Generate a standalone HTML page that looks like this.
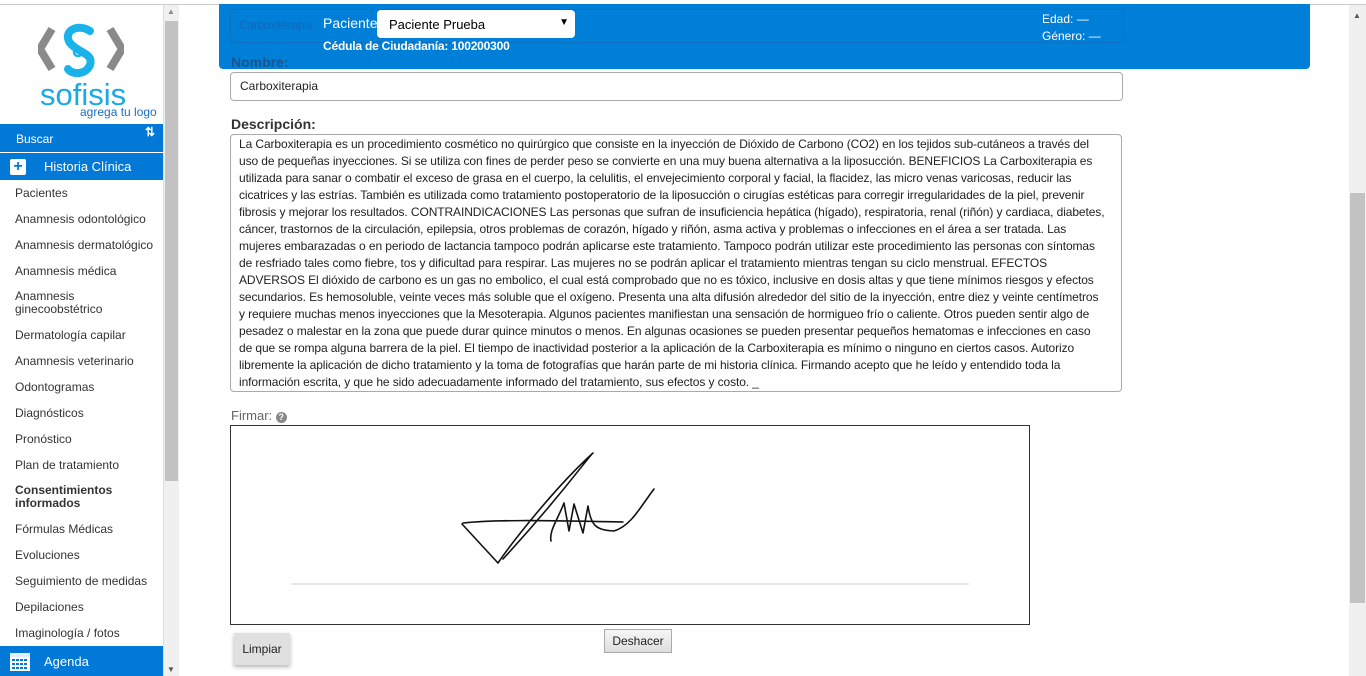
<!DOCTYPE html>
<html><head><meta charset="utf-8"><style>
body{margin:0;width:1366px;height:676px;overflow:hidden;background:#fff;font-family:"Liberation Sans",sans-serif;position:relative}
.abs{position:absolute}
#top{left:0;top:0;width:1366px;height:4px;background:#fff;border-bottom:1px solid #ccc}
#side{left:0;top:5px;width:163px;height:671px;background:#fff;border-right:1px solid #ddd}
#sbar{left:164px;top:5px;width:15px;height:671px;background:#f0f0f0}
#sbar .th{position:absolute;left:1px;top:16px;width:13px;height:460px;background:#c2c2c2}
.nav{position:absolute;left:15px;font-size:12px;color:#333}
.blue{position:absolute;left:0;width:163px;background:#0279d6;color:#fff;font-size:12px}
#hdr{left:219px;top:4px;width:1091px;height:65px;background:#007fd8;border-radius:0 0 4px 4px}
.lbl{font-weight:bold;font-size:14px;color:#333}
.box{border:1px solid #aaa;border-radius:4px;background:#fff}
#desc{left:230px;top:134px;width:878px;height:251px;padding:1px 4px 4px 8px;font-size:12px;line-height:17px;color:#222;border-radius:4px;white-space:nowrap;overflow:hidden;letter-spacing:-0.1px}
#msb{left:1349px;top:5px;width:17px;height:671px;background:#f0f0f0}
#msb .th{position:absolute;left:1px;top:188px;width:15px;height:410px;background:#c2c2c2}
</style></head><body>
<div class="abs" id="top"></div>
<div class="abs" id="side">
<svg class="abs" style="left:38px;top:14px" width="86" height="90" viewBox="0 0 86 90">
<path d="M14 10 L2 30 L14 50" stroke="#8a8a8a" stroke-width="8" fill="none"/>
<path d="M72 10 L84 30 L72 50" stroke="#8a8a8a" stroke-width="8" fill="none"/>
<path d="M52 12 C40 4 24 12 32 24 C40 34 56 34 52 46 C48 56 34 56 30 50" stroke="#19b3ea" stroke-width="8" fill="none" stroke-linecap="round"/>
<circle cx="40" cy="33" r="4" fill="none" stroke="#19b3ea" stroke-width="2.5"/>
</svg>
<div class="abs" style="left:40px;top:72px;font-size:31px;color:#19a8e8">sofisis</div>
<div class="abs" style="left:80px;top:100px;font-size:12px;color:#1a6fc0">agrega tu logo</div>
<div class="blue" style="top:119px;height:28px"><span style="position:absolute;left:16px;top:8px">Buscar</span><span style="position:absolute;right:8px;top:1px;font-weight:bold">⇅</span></div>
<div class="blue" style="top:148px;height:27px"><span style="position:absolute;left:10px;top:6px;width:16px;height:16px;background:#fff;border-radius:2px;color:#0279d6;font-weight:bold;font-size:16px;line-height:16px;text-align:center">+</span><span style="position:absolute;left:44px;top:6px;font-size:13px">Historia Clínica</span></div>
<div class="nav" style="top:181px">Pacientes</div>
<div class="nav" style="top:207px">Anamnesis odontológico</div>
<div class="nav" style="top:233px">Anamnesis dermatológico</div>
<div class="nav" style="top:259px">Anamnesis médica</div>
<div class="nav" style="top:285px;line-height:13px">Anamnesis<br>ginecoobstétrico</div>
<div class="nav" style="top:323px">Dermatología capilar</div>
<div class="nav" style="top:349px">Anamnesis veterinario</div>
<div class="nav" style="top:375px">Odontogramas</div>
<div class="nav" style="top:401px">Diagnósticos</div>
<div class="nav" style="top:427px">Pronóstico</div>
<div class="nav" style="top:453px">Plan de tratamiento</div>
<div class="nav" style="top:479px;line-height:13px;font-weight:bold">Consentimientos<br>informados</div>
<div class="nav" style="top:517px">Fórmulas Médicas</div>
<div class="nav" style="top:543px">Evoluciones</div>
<div class="nav" style="top:569px">Seguimiento de medidas</div>
<div class="nav" style="top:595px">Depilaciones</div>
<div class="nav" style="top:621px">Imaginología / fotos</div>
<div class="blue" style="top:641px;height:30px"><svg style="position:absolute;left:10px;top:5px" width="20" height="20"><rect x="0" y="2" width="20" height="18" fill="#fff"/><rect x="0" y="2" width="20" height="4" fill="#dfefff"/><g fill="#0279d6"><rect x="2" y="8" width="3" height="2"/><rect x="6" y="8" width="3" height="2"/><rect x="10" y="8" width="3" height="2"/><rect x="14" y="8" width="3" height="2"/><rect x="2" y="12" width="3" height="2"/><rect x="6" y="12" width="3" height="2"/><rect x="10" y="12" width="3" height="2"/><rect x="14" y="12" width="3" height="2"/><rect x="2" y="16" width="3" height="2"/><rect x="6" y="16" width="3" height="2"/><rect x="10" y="16" width="3" height="2"/><rect x="14" y="16" width="3" height="2"/></g></svg><span style="position:absolute;left:44px;top:8px;font-size:13px">Agenda</span></div>
</div>
<div class="abs" id="sbar"><div class="th"></div><span style="position:absolute;left:3px;top:2px;font-size:8px;color:#888">▲</span><span style="position:absolute;left:3px;bottom:2px;font-size:8px;color:#555">▼</span></div>

<div class="abs" id="hdr">
<div class="abs" style="left:11px;top:5px;width:892px;height:32px;border:1px solid #0a72c0;border-radius:4px"></div>
<div class="abs" style="left:20px;top:14px;font-size:12px;color:#1068b8;letter-spacing:-0.3px">Carboxiterapia</div>
<div class="abs" style="left:104px;top:11px;font-size:14px;color:#fff">Paciente:</div>
<div class="abs" style="left:158px;top:6px;width:198px;height:28px;background:#fff;border-radius:4px;font-size:13px;color:#000"><span style="position:absolute;left:12px;top:7px">Paciente Prueba</span><span style="position:absolute;right:6px;top:7px;font-size:10px">▼</span></div>
<div class="abs" style="left:104px;top:35px;font-size:12px;color:#fff;font-weight:bold;letter-spacing:-0.2px">Cédula de Ciudadanía: 100200300</div>
<div class="abs" style="left:823px;top:7px;font-size:12px;color:#fff;line-height:17px">Edad: —<br>Género: —</div>
</div>
<div class="abs lbl" style="left:231px;top:54px;color:#1a5590">Nombre:</div>
<div class="abs box" style="left:230px;top:72px;width:891px;height:27px"><span style="position:absolute;left:9px;top:6px;font-size:12px;color:#222">Carboxiterapia</span></div>
<div class="abs lbl" style="left:231px;top:116px">Descripción:</div>
<div class="abs box" id="desc">La Carboxiterapia es un procedimiento cosmético no quirúrgico que consiste en la inyección de Dióxido de Carbono (CO2) en los tejidos sub-cutáneos a través del<br>uso de pequeñas inyecciones. Si se utiliza con fines de perder peso se convierte en una muy buena alternativa a la liposucción. BENEFICIOS La Carboxiterapia es<br>utilizada para sanar o combatir el exceso de grasa en el cuerpo, la celulitis, el envejecimiento corporal y facial, la flacidez, las micro venas varicosas, reducir las<br>cicatrices y las estrías. También es utilizada como tratamiento postoperatorio de la liposucción o cirugías estéticas para corregir irregularidades de la piel, prevenir<br>fibrosis y mejorar los resultados. CONTRAINDICACIONES Las personas que sufran de insuficiencia hepática (hígado), respiratoria, renal (riñón) y cardiaca, diabetes,<br>cáncer, trastornos de la circulación, epilepsia, otros problemas de corazón, hígado y riñón, asma activa y problemas o infecciones en el área a ser tratada. Las<br>mujeres embarazadas o en periodo de lactancia tampoco podrán aplicarse este tratamiento. Tampoco podrán utilizar este procedimiento las personas con síntomas<br>de resfriado tales como fiebre, tos y dificultad para respirar. Las mujeres no se podrán aplicar el tratamiento mientras tengan su ciclo menstrual. EFECTOS<br>ADVERSOS El dióxido de carbono es un gas no embolico, el cual está comprobado que no es tóxico, inclusive en dosis altas y que tiene mínimos riesgos y efectos<br>secundarios. Es hemosoluble, veinte veces más soluble que el oxígeno. Presenta una alta difusión alrededor del sitio de la inyección, entre diez y veinte centímetros<br>y requiere muchas menos inyecciones que la Mesoterapia. Algunos pacientes manifiestan una sensación de hormigueo frío o caliente. Otros pueden sentir algo de<br>pesadez o malestar en la zona que puede durar quince minutos o menos. En algunas ocasiones se pueden presentar pequeños hematomas e infecciones en caso<br>de que se rompa alguna barrera de la piel. El tiempo de inactividad posterior a la aplicación de la Carboxiterapia es mínimo o ninguno en ciertos casos. Autorizo<br>libremente la aplicación de dicho tratamiento y la toma de fotografías que harán parte de mi historia clínica. Firmando acepto que he leído y entendido toda la<br>información escrita, y que he sido adecuadamente informado del tratamiento, sus efectos y costo. _</div>
<div class="abs" style="left:231px;top:408px;font-size:13px;color:#666">Firmar: <span style="display:inline-block;width:11px;height:11px;border-radius:50%;background:#888;color:#fff;font-size:9px;line-height:11px;text-align:center;font-weight:bold">?</span></div>
<div class="abs" style="left:230px;top:425px;width:798px;height:198px;border:1px solid #333;background:#fff">
<div class="abs" style="left:60px;top:157px;width:678px;height:2px;background:#e8e8e8"></div>
<svg class="abs" style="left:0;top:0" width="798" height="198"><path d="M232 97 C270 93 330 95 392 96 M231 98 L267 137 C275 125 320 65 362 27 C358 30 330 70 272 133 M320 115 C318 105 326 95 333 77 L338 105 L343 78 L352 107 L357 80 C360 100 365 104 383 105 C400 100 410 80 423 63" stroke="#111" stroke-width="1.6" fill="none" stroke-linejoin="round" stroke-linecap="round"/></svg>
</div>
<div class="abs" style="left:234px;top:633px;width:56px;height:32px;background:#e0e0e0;box-shadow:0 2px 4px rgba(0,0,0,.3);font-size:12px;color:#222;text-align:center;line-height:32px">Limpiar</div>
<div class="abs" style="left:604px;top:629px;width:66px;height:22px;background:linear-gradient(#f6f6f6,#dedede);border:1px solid #aaa;font-size:12px;color:#222;text-align:center;line-height:22px">Deshacer</div>
<div class="abs" id="msb"><div class="th"></div><span style="position:absolute;left:4px;top:6px;font-size:8px;color:#555">▲</span></div>
</body></html>
